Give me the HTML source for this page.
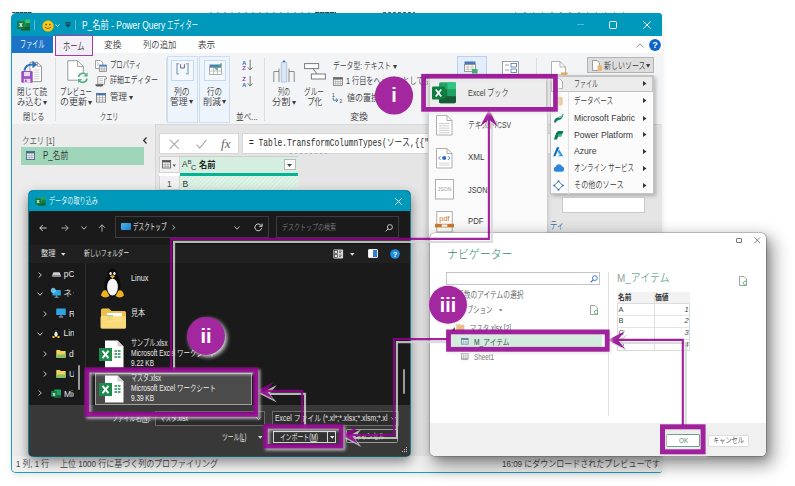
<!DOCTYPE html>
<html lang="ja"><head>
<meta charset="utf-8">
<title>Power Query エディター</title>
<style>
*{box-sizing:border-box;margin:0;padding:0}
html,body{width:795px;height:486px;overflow:hidden;background:#fff}
body{font-family:"Liberation Sans","Noto Sans CJK JP",sans-serif;font-size:9px;font-weight:350;color:#3a3a3a;position:relative}
.a{position:absolute}
.t{position:absolute;white-space:nowrap;line-height:1;transform-origin:0 50%;transform:translateY(-50%)}
.w{color:#fff}
.mono{font-family:"Liberation Mono","Noto Sans CJK JP",monospace}
svg{position:absolute;overflow:visible}
.sep{position:absolute;width:1px;background:#dcdcdc}
</style>
</head>
<body>
<!-- ===== fragments of cropped text above the window ===== -->
<div class="a" style="left:12px;top:11.6px;width:20px;height:1.6px;background:repeating-linear-gradient(90deg,#222 0 3px,#777 3px 4px);opacity:.85"></div>
<div class="a" style="left:210px;top:12.2px;width:100px;height:1px;background:repeating-linear-gradient(90deg,#777 0 2px,transparent 2px 7px);opacity:.55"></div>
<div class="a" style="left:315px;top:11.6px;width:21px;height:1.6px;background:repeating-linear-gradient(90deg,#222 0 4px,#888 4px 5px);opacity:.85"></div>
<div class="a" style="left:383px;top:11.8px;width:32px;height:1.4px;background:repeating-linear-gradient(90deg,#333 0 3px,transparent 3px 5px);opacity:.8"></div>
<div class="a" style="left:515px;top:12.2px;width:113px;height:1px;background:repeating-linear-gradient(90deg,#666 0 1.5px,transparent 1.5px 9px);opacity:.6"></div>
<!-- ===== MAIN WINDOW ===== -->
<div class="a" style="left:11px;top:13px;width:651px;height:460px;background:#e5e5e5;border-radius:5px;box-shadow:0 3px 6px rgba(0,0,0,.10)"></div>
<!-- title bar -->
<div class="a" style="left:11px;top:13px;width:651px;height:23px;background:#0099bc;border-radius:5px 3px 0 0"></div>
<!-- tab row -->
<div class="a" style="left:12px;top:36px;width:650px;height:17.3px;background:#fff"></div>
<div class="a" style="left:11.5px;top:35.8px;width:41.5px;height:17px;background:#1b73c8"></div>
<!-- ribbon -->
<div class="a" style="left:12px;top:53.3px;width:650px;height:70.7px;background:#f3f4f6"></div>
<div class="a" style="left:12px;top:123.7px;width:650px;height:1px;background:#d8d8d8"></div>
<div class="a" style="left:55px;top:34.5px;width:38px;height:21px;background:#f4eff6;border:1px solid #a23aa8"></div>
<!-- window teal border (left/right/bottom) -->
<div class="a" style="left:11px;top:30px;width:651px;height:443px;border:1px solid #1a9dbd;border-top:none;border-right:none;border-radius:0 0 3px 5px;pointer-events:none"></div>

<!-- title bar content -->
<svg style="left:17px;top:18.5px" width="13" height="12" viewBox="0 0 13 12">
  <rect x="4" y="0.5" width="9" height="11" rx="1" fill="#21a366"></rect>
  <rect x="8.5" y="0.5" width="4.5" height="3.7" fill="#33c481"></rect>
  <rect x="8.5" y="4.2" width="4.5" height="3.7" fill="#107c41"></rect>
  <rect x="4" y="7.9" width="9" height="3.6" fill="#185c37"></rect>
  <rect x="0" y="2.3" width="7.6" height="7.6" rx="1" fill="#107c41"></rect>
  <text x="3.8" y="8.4" font-size="6.5" font-weight="bold" fill="#fff" text-anchor="middle" font-family="Liberation Sans, sans-serif">x</text>
</svg>
<div class="a" style="left:34px;top:20px;width:1px;height:10px;background:#5fbdd3"></div>
<svg style="left:41.5px;top:19.5px" width="12" height="12" viewBox="0 0 12 12">
  <circle cx="6" cy="6" r="5.6" fill="#f8c81c" stroke="#c79a10" stroke-width=".5"></circle>
  <circle cx="4.1" cy="4.6" r=".8" fill="#5a4300"></circle><circle cx="7.9" cy="4.6" r=".8" fill="#5a4300"></circle>
  <path d="M3.2 7.2 Q6 10 8.8 7.2" fill="none" stroke="#5a4300" stroke-width=".8" stroke-linecap="round"></path>
</svg>
<svg style="left:55px;top:23.5px" width="5" height="3" viewBox="0 0 5 3"><path d="M.5 .3 L2.5 2.5 L4.5 .3" fill="none" stroke="#d8eef4" stroke-width=".9"></path></svg>
<svg style="left:64.5px;top:22px" width="6" height="6" viewBox="0 0 6 6"><rect x=".3" y=".3" width="5.4" height="1.1" fill="#14333c"></rect><path d="M.4 2.6 H5.6 L3 5.6 Z" fill="#14333c"></path></svg>
<div class="a" style="left:75px;top:20px;width:1px;height:10px;background:#5fbdd3"></div>
<span class="t w" style="left: 81.7px; top: 24.8px; font-size: 11px; transform: translateY(-50%) scaleX(0.759);">P_名前 - Power Query</span>
<span class="t w" style="left: 167.3px; top: 24.8px; font-size: 11px; transform: translateY(-50%) scaleX(0.572);">エディター</span>
<!-- window controls -->
<div class="a" style="left:577px;top:24px;width:7px;height:1px;background:#4fb9d3"></div>
<div class="a" style="left:609px;top:21px;width:8px;height:8px;border:1px solid #fff;border-radius:1.5px"></div>
<svg style="left:642.5px;top:21px" width="8" height="8" viewBox="0 0 8 8"><path d="M.4 .4 L7.6 7.6 M7.6 .4 L.4 7.6" stroke="#fff" stroke-width="1"></path></svg>
<!-- tabs -->
<span class="t w" style="left: 20px; top: 45px; font-size: 10px; transform: translateY(-50%) scaleX(0.613);">ファイル</span>
<span class="t" style="left: 62.5px; top: 45.5px; font-size: 10.5px; color: rgb(51, 51, 51); transform: translateY(-50%) scaleX(0.689);">ホーム</span>
<span class="t" style="left: 104.4px; top: 45.2px; font-size: 9.5px; color: rgb(58, 58, 58); transform: translateY(-50%) scaleX(0.91);">変換</span>
<span class="t" style="left: 143.2px; top: 45.2px; font-size: 9.5px; color: rgb(58, 58, 58); transform: translateY(-50%) scaleX(0.876);">列の追加</span>
<span class="t" style="left: 198.3px; top: 45.2px; font-size: 9.5px; color: rgb(58, 58, 58); transform: translateY(-50%) scaleX(0.905);">表示</span>
<svg style="left:636px;top:42.5px" width="8" height="5" viewBox="0 0 8 5"><path d="M.5 4.3 L4 .8 L7.5 4.3" fill="none" stroke="#8a8a8a" stroke-width="1"></path></svg>
<svg style="left:649.2px;top:39px" width="12" height="12" viewBox="0 0 12 12"><circle cx="6" cy="6" r="5.9" fill="#0b64c8"></circle><text x="6" y="9.2" text-anchor="middle" font-size="9" font-weight="bold" fill="#fff" font-family="Liberation Sans, sans-serif">?</text></svg>
<!-- ribbon content -->
<!-- group 1: close & load -->
<svg style="left:20px;top:59px" width="23" height="25" viewBox="0 0 23 25">
  <path d="M10 3.3 H17.5 L21.5 7.3 V22.6 H10 Z" fill="#fff" stroke="#8f8f8f" stroke-width=".9"></path>
  <path d="M17.5 3.3 V7.3 H21.5" fill="none" stroke="#8f8f8f" stroke-width=".8"></path>
  <path d="M14 11h5.5M14 13.2h5.5M14 15.4h5.5M14 17.6h5.5M14 19.8h5.5" stroke="#c3c3c3" stroke-width=".8"></path>
  <path d="M4.4 11.6 Q5.2 5.2 13.4 5.5" fill="none" stroke="#2f72b8" stroke-width="2.1"></path>
  <path d="M12.4 1.8 L17.4 5.7 L12.4 9.2 Z" fill="#2f72b8"></path>
  <rect x="1.3" y="12" width="11.4" height="11.8" rx="1.2" fill="#9a4fc0"></rect>
  <rect x="4" y="13" width="6" height="4.2" fill="#ead9f3"></rect>
  <rect x="3.8" y="19.8" width="6.6" height="4" fill="#ead9f3"></rect>
  <rect x="5" y="20.6" width="1.6" height="2.4" fill="#9a4fc0"></rect>
</svg>
<span class="t" style="left: 16.5px; top: 92.3px; font-size: 9.5px; transform: translateY(-50%) scaleX(0.789);">閉じて読</span>
<span class="t" style="left: 16.5px; top: 102.3px; font-size: 9.5px; transform: translateY(-50%) scaleX(0.877);">み込む</span>
<span class="t" style="left:42.5px;top:102.8px;font-size:7.5px">▾</span>
<span class="t" style="left: 22.5px; top: 117.3px; font-size: 9.5px; transform: translateY(-50%) scaleX(0.754);">閉じる</span>
<div class="sep" style="left:55px;top:58px;height:63px"></div>
<!-- group 2: query -->
<svg style="left:66.5px;top:60px" width="22" height="24" viewBox="0 0 22 24">
  <path d="M.8 .7 H10.5 L16.3 6.5 V20.2 H.8 Z" fill="#fff" stroke="#8f8f8f" stroke-width=".9"></path>
  <path d="M10.5 .7 V6.5 H16.3" fill="none" stroke="#8f8f8f" stroke-width=".8"></path>
  <circle cx="15.8" cy="17.8" r="5.8" fill="#f3f4f6"></circle>
  <path d="M11.6 17 A4.3 4.3 0 0 1 19 14.6" fill="none" stroke="#58b384" stroke-width="1.7"></path>
  <path d="M20.6 12.4 V16.6 H16.4 Z" fill="#58b384"></path>
  <path d="M20 18.6 A4.3 4.3 0 0 1 12.6 21" fill="none" stroke="#58b384" stroke-width="1.7"></path>
  <path d="M11 23.2 V19 H15.2 Z" fill="#58b384"></path>
</svg>
<span class="t" style="left: 60px; top: 92.3px; font-size: 9.5px; transform: translateY(-50%) scaleX(0.673);">プレビュー</span>
<span class="t" style="left: 60px; top: 102.3px; font-size: 9.5px; transform: translateY(-50%) scaleX(0.947);">の更新</span>
<span class="t" style="left:88px;top:102.8px;font-size:7.5px">▾</span>
<svg style="left:95px;top:59.5px" width="12" height="12" viewBox="0 0 12 12"><path d="M.5 .5 H5.3 L7.8 3 V8.5 H.5Z" fill="#fff" stroke="#8a8a8a" stroke-width=".8"></path><path d="M2 3.2h2M2 5h2" stroke="#9ab" stroke-width=".7"></path><rect x="4.6" y="5" width="7" height="6.6" fill="#fff" stroke="#777" stroke-width=".7"></rect><rect x="4.6" y="5" width="7" height="1.6" fill="#3f7fc4"></rect><path d="M4.6 8.2h7M4.6 9.9h7M6.9 6.6v5M9.2 6.6v5" stroke="#888" stroke-width=".5"></path></svg>
<span class="t" style="left: 109.5px; top: 65.4px; font-size: 9.5px; transform: translateY(-50%) scaleX(0.671);">プロパティ</span>
<svg style="left:95px;top:75.5px" width="12" height="11" viewBox="0 0 12 11"><path d="M2.8 .5 H10 Q11.4 .5 11.4 2 V3 H9.6 V8.2 H2.8Z" fill="#fff" stroke="#7d7d7d" stroke-width=".8"></path><path d="M4.3 2.8h3.6M4.3 4.5h3.6M4.3 6.2h3.6" stroke="#b5b5b5" stroke-width=".7"></path><path d="M.4 8.2 H8.2 V9 Q8.2 10.4 6.8 10.4 H1.8 Q.4 10.4 .4 9Z" fill="#5f5f5f"></path></svg>
<span class="t" style="left: 109.5px; top: 80.3px; font-size: 9.5px; transform: translateY(-50%) scaleX(0.729);">詳細エディター</span>
<svg style="left:96px;top:93px" width="10" height="9.5" viewBox="0 0 10 9.5"><rect x=".4" y=".4" width="9.2" height="8.7" fill="#fff" stroke="#6f6f6f" stroke-width=".8"></rect><rect x=".4" y=".4" width="9.2" height="2" fill="#3f74b5"></rect><path d="M.4 4.7h9.2M.4 6.9h9.2M3.4 2.4v6.7M6.5 2.4v6.7" stroke="#8a8a8a" stroke-width=".55"></path></svg>
<span class="t" style="left: 109.5px; top: 97.4px; font-size: 9.5px; transform: translateY(-50%) scaleX(0.894);">管理</span>
<span class="t" style="left:129.3px;top:97.8px;font-size:7.5px">▾</span>
<span class="t" style="left: 99.5px; top: 117.3px; font-size: 9.5px; transform: translateY(-50%) scaleX(0.649);">クエリ</span>
<div class="sep" style="left:165.8px;top:58px;height:63px"></div>
<!-- group 3: manage columns / reduce rows -->
<div class="a" style="left:167.2px;top:56.2px;width:30.4px;height:66.8px;background:#eef4fb;border:1px solid #c9def3"></div>
<div class="a" style="left:199.4px;top:56.2px;width:30.2px;height:66.8px;background:#eef4fb;border:1px solid #c9def3"></div>
<div class="a" style="left:171.3px;top:59.5px;width:22.5px;height:21.8px;background:#f4f8fc;border:1px solid #c3d9f0"></div>
<svg style="left:176px;top:62.5px" width="13" height="12" viewBox="0 0 13 12"><path d="M3 .8 H1 V10.8 H3" fill="none" stroke="#9fb3ca" stroke-width="1.6"></path><path d="M10 .8 H12 V10.8 H10" fill="none" stroke="#9fb3ca" stroke-width="1.6"></path><path d="M4.6 1.2 V5 H8.4 V1.2" fill="none" stroke="#5b5470" stroke-width=".9"></path></svg>
<span class="t" style="left: 174.3px; top: 91.5px; font-size: 9.5px; transform: translateY(-50%) scaleX(0.826);">列の</span>
<span class="t" style="left: 170.2px; top: 101.5px; font-size: 9.5px; transform: translateY(-50%) scaleX(0.926);">管理</span>
<span class="t" style="left:189.3px;top:102px;font-size:7.5px">▾</span>
<div class="a" style="left:203.7px;top:59.5px;width:22.3px;height:21.8px;background:#f4f8fc;border:1px solid #c3d9f0"></div>
<svg style="left:208.7px;top:63px" width="13.5" height="12" viewBox="0 0 13.5 12"><rect x=".5" y="1.5" width="12" height="3" fill="#4a7dbd"></rect><rect x=".5" y="4.5" width="12" height="7" fill="#fff" stroke="#8f8f8f" stroke-width=".7"></rect><path d="M.5 8h12M4.5 4.5v7M8.5 4.5v7" stroke="#9a9a9a" stroke-width=".6"></path><path d="M5 3.6 L7.3 6.2 L12.6 .6" fill="none" stroke="#4cae73" stroke-width="1.4"></path></svg>
<span class="t" style="left: 206.6px; top: 91.5px; font-size: 9.5px; transform: translateY(-50%) scaleX(0.789);">行の</span>
<span class="t" style="left: 202.9px; top: 101.5px; font-size: 9.5px; transform: translateY(-50%) scaleX(0.947);">削減</span>
<span class="t" style="left:222.3px;top:102px;font-size:7.5px">▾</span>
<!-- sort -->
<svg style="left:241.5px;top:59px" width="13" height="30" viewBox="0 0 13 30">
  <text x="0" y="5.6" font-size="6" fill="#2f72b8" font-weight="bold" font-family="Liberation Sans, sans-serif">A</text>
  <text x=".2" y="11.4" font-size="6" fill="#8e3fb5" font-weight="bold" font-family="Liberation Sans, sans-serif">Z</text>
  <path d="M8.2 .8 V10.8 M5.9 8.3 L8.2 11 L10.5 8.3" fill="none" stroke="#666" stroke-width=".9"></path>
  <text x=".2" y="21.8" font-size="6" fill="#8e3fb5" font-weight="bold" font-family="Liberation Sans, sans-serif">Z</text>
  <text x="0" y="27.6" font-size="6" fill="#2f72b8" font-weight="bold" font-family="Liberation Sans, sans-serif">A</text>
  <path d="M8.2 17 V27 M5.9 24.5 L8.2 27.2 L10.5 24.5" fill="none" stroke="#666" stroke-width=".9"></path>
</svg>
<span class="t" style="left: 236px; top: 117.4px; font-size: 9.5px; transform: translateY(-50%) scaleX(0.806);">並べ...</span>
<div class="sep" style="left:263.8px;top:58px;height:63px"></div>
<!-- transform -->
<svg style="left:272.5px;top:59.5px" width="22" height="23" viewBox="0 0 22 23">
  <path d="M8.3 2.5 H13.7 V22 H8.3Z" fill="#dbe7f5" stroke="#9db4d3" stroke-width=".7"></path>
  <path d="M11 0 L12.6 2 H9.4Z" fill="#2b6fc2"></path>
  <path d="M6 11.5 H.8 V22 M16 11.5 H21.2 V22" fill="none" stroke="#8a8a8a" stroke-width="1"></path>
  <path d="M6 8.5 V22 M16 8.5 V22" fill="none" stroke="#8a8a8a" stroke-width="1"></path>
</svg>
<span class="t" style="left: 278px; top: 92.3px; font-size: 9.5px; transform: translateY(-50%) scaleX(0.631);">列の</span>
<span class="t" style="left: 272px; top: 102.3px; font-size: 9.5px; transform: translateY(-50%) scaleX(0.973);">分割</span>
<span class="t" style="left:291.5px;top:102.8px;font-size:7.5px">▾</span>
<svg style="left:304px;top:62.5px" width="22" height="18" viewBox="0 0 22 18">
  <rect x=".6" y=".6" width="14" height="5" fill="#fff" stroke="#7a7a7a" stroke-width="1"></rect>
  <rect x="7.4" y="11" width="14" height="5" fill="#fff" stroke="#7a7a7a" stroke-width="1"></rect>
  <path d="M9 5.6 L13 11" stroke="#7a7a7a" stroke-width="1"></path>
</svg>
<span class="t" style="left: 304px; top: 92.3px; font-size: 9.5px; transform: translateY(-50%) scaleX(0.701);">グルー</span>
<span class="t" style="left: 307px; top: 102.3px; font-size: 9.5px; transform: translateY(-50%) scaleX(0.789);">プ化</span>
<span class="t" style="left: 332.5px; top: 66px; font-size: 9.5px; transform: translateY(-50%) scaleX(0.716);">データ型: テキスト</span>
<span class="t" style="left:393px;top:66.5px;font-size:7.5px">▾</span>
<svg style="left:332.5px;top:76.5px" width="10" height="9" viewBox="0 0 10 9"><rect x=".4" y=".4" width="9.2" height="8.2" fill="#fff" stroke="#666" stroke-width=".7"></rect><rect x=".4" y=".4" width="9.2" height="2.2" fill="#6a6a6a"></rect><path d="M.4 4.6h9.2M.4 6.6h9.2M2.7 2.6v6M5 2.6v6M7.3 2.6v6" stroke="#888" stroke-width=".5"></path></svg>
<span class="t" style="left: 346px; top: 81px; font-size: 9.5px; transform: translateY(-50%) scaleX(0.756);">1 行目をヘッダーとして使用</span>
<svg style="left:332px;top:91.8px" width="12" height="12" viewBox="0 0 12 12"><text x="0" y="4.5" font-size="5" fill="#444" font-family="Liberation Sans, sans-serif">1</text><text x="7.5" y="11" font-size="5" fill="#444" font-family="Liberation Sans, sans-serif">2</text><path d="M1.2 5.5 V8.2 H5.5 M4 6.5 L5.8 8.2 L4 9.9" fill="none" stroke="#2b6fc2" stroke-width=".9"></path></svg>
<span class="t" style="left: 346.5px; top: 97.8px; font-size: 9.5px; transform: translateY(-50%) scaleX(0.842);">値の置換</span>
<span class="t" style="left: 349.5px; top: 117.3px; font-size: 9.5px; transform: translateY(-50%) scaleX(0.947);">変換</span>
<!-- right side of ribbon (mostly hidden by menus) -->
<div class="a" style="left:456.5px;top:55.5px;width:30.5px;height:30px;background:#e3eefb;border:1px solid #b9d1ee"></div>
<svg style="left:464px;top:61px" width="14" height="13" viewBox="0 0 14 13"><rect x=".5" y=".5" width="11" height="3" fill="#4a77b5"></rect><rect x=".5" y="3.5" width="11" height="7" fill="#fff" stroke="#777" stroke-width=".7"></rect><path d="M.5 6h11M.5 8.2h11M4 3.5v7M8 3.5v7" stroke="#999" stroke-width=".5"></path><rect x="8" y="8" width="5.5" height="4.5" fill="#3fae6a"></rect></svg>
<svg style="left:502px;top:61px" width="17" height="14" viewBox="0 0 17 14"><rect x=".5" y=".5" width="16" height="13" fill="#fff" stroke="#8a8a8a" stroke-width=".8"></rect><path d="M3 4h4M3 9h4" stroke="#8a8a8a" stroke-width=".8"></path><rect x="9" y="2.5" width="5.5" height="3.5" fill="#fff" stroke="#4a77b5" stroke-width=".8"></rect><rect x="9" y="8" width="5.5" height="3.5" fill="#fff" stroke="#4a77b5" stroke-width=".8"></rect></svg>
<div class="sep" style="left:536px;top:58px;height:63px"></div>
<svg style="left:550.5px;top:60.5px" width="17" height="14" viewBox="0 0 17 14"><path d="M.5 .5 H9 L14.5 6 V14 H.5Z" fill="#fff" stroke="#a0a0a0" stroke-width=".8"></path><path d="M9 .5 V6 H14.5" fill="none" stroke="#a0a0a0" stroke-width=".8"></path><rect x="10" y="11.5" width="6.5" height="2" fill="#e8a33d"></rect></svg>
<!-- new source button -->
<div class="a" style="left:587px;top:57.2px;width:66.5px;height:16.2px;background:#dddddd;border:1px solid #b4b4b4"></div>
<svg style="left:591.5px;top:60px" width="11" height="11" viewBox="0 0 11 11"><path d="M.5 .5 H5 L7.5 3 V10.5 H.5Z" fill="#fff" stroke="#888" stroke-width=".8"></path><rect x="5.5" y="5" width="4.5" height="6" rx="1.5" fill="#e9b77a"></rect></svg>
<span class="t" style="left: 603.5px; top: 65.5px; font-size: 9.5px; transform: translateY(-50%) scaleX(0.734);">新しいソース</span>
<span class="t" style="left:646px;top:66px;font-size:7.5px">▾</span>
<!-- body: query pane -->
<div class="a" style="left:12px;top:124px;width:143px;height:332px;background:#ececec"></div>
<div class="a" style="left:155px;top:124px;width:1px;height:332px;background:#d6d6d6"></div>
<span class="t" style="left: 21.5px; top: 141.3px; font-size: 9.5px; color: rgb(85, 85, 85); transform: translateY(-50%) scaleX(0.779);">クエリ [1]</span>
<svg style="left:143px;top:136.5px" width="4" height="7" viewBox="0 0 4 7"><path d="M3.5 .5 L.7 3.5 L3.5 6.5" fill="none" stroke="#333" stroke-width="1.3"></path></svg>
<div class="a" style="left:21px;top:146.5px;width:122.8px;height:18.2px;background:#9fd5b8"></div>
<svg style="left:25.7px;top:151.2px" width="9" height="9" viewBox="0 0 8 8"><rect x=".4" y=".4" width="7.2" height="7.2" fill="#fff" stroke="#4a6a8a" stroke-width=".8"></rect><rect x=".4" y=".4" width="7.2" height="1.8" fill="#4a6a8a"></rect><path d="M.4 4.2h7.2M.4 6h7.2M2.8 2.2v5.4M5.2 2.2v5.4" stroke="#6f8aa6" stroke-width=".5"></path></svg>
<span class="t" style="left: 43px; top: 155.8px; font-size: 10px; color: rgb(51, 51, 51); transform: translateY(-50%) scaleX(0.785);">P_名前</span>
<!-- formula bar -->
<div class="a" style="left:158.5px;top:133px;width:80.5px;height:20.5px;background:#fff;border:1px solid #d6d6d6"></div>
<svg style="left:168.5px;top:138.5px" width="10.5" height="10.5" viewBox="0 0 8 8"><path d="M.5 .5 L7.5 7.5 M7.5 .5 L.5 7.5" stroke="#a9a9a9" stroke-width=".9"></path></svg>
<svg style="left:196px;top:138.5px" width="11" height="10" viewBox="0 0 9 8"><path d="M.5 4.5 L3 7.3 L8.5 .6" fill="none" stroke="#a9a9a9" stroke-width=".9"></path></svg>
<span class="t" style="left: 221.3px; top: 143px; font-size: 13px; font-family: &quot;Liberation Serif&quot;, serif; font-style: italic; color: rgb(102, 102, 102); transform: translateY(-50%) scaleX(1.012);">fx</span>
<div class="a" style="left:242px;top:133px;width:320px;height:20.5px;background:#fff;border:1px solid #d6d6d6"></div>
<span class="t mono" style="left: 249px; top: 143.5px; font-size: 10px; color: rgb(42, 42, 42); transform: translateY(-50%) scaleX(0.791);">= Table.TransformColumnTypes(ソース,{{"名前", type text}})</span>
<div class="a" style="left:290px;top:152.5px;width:40px;height:1px;background:repeating-linear-gradient(90deg,#999 0 2px,transparent 2px 5px);opacity:.6"></div>
<!-- grid -->
<div class="a" style="left:159px;top:156px;width:138.5px;height:34.5px;background:#fff"></div>
<div class="a" style="left:159px;top:156px;width:20.5px;height:16.5px;background:#f1f1f1;border:1px solid #d4d4d4"></div>
<svg style="left:162px;top:160px" width="15" height="9" viewBox="0 0 15 9"><rect x=".4" y=".4" width="8.2" height="7.6" fill="#fff" stroke="#555" stroke-width=".8"></rect><rect x=".4" y=".4" width="8.2" height="2" fill="#555"></rect><path d="M.4 4.4h8.2M.4 6.2h8.2M3.2 2.4v5.6M5.9 2.4v5.6" stroke="#777" stroke-width=".5"></path><path d="M10.5 4.5 h3.5 l-1.75 2.2z" fill="#555"></path></svg>
<div class="a" style="left:179.5px;top:156px;width:118px;height:17px;background:#d4eee0;border-top:1px solid #cfcfcf"></div>
<div class="a" style="left:179.5px;top:172.6px;width:118px;height:3.2px;background:#05b292"></div>
<svg style="left:181.7px;top:157.5px" width="15.4" height="13.2" viewBox="0 0 14 12"><text x="0" y="8.5" font-size="7.5" fill="#333" font-family="Liberation Sans, sans-serif">A</text><text x="5" y="5.2" font-size="5.5" fill="#333" font-family="Liberation Sans, sans-serif">B</text><text x="8.2" y="10.8" font-size="6.5" fill="#333" font-family="Liberation Sans, sans-serif">C</text></svg>
<span class="t" style="left: 198.7px; top: 164.5px; font-size: 9px; font-weight: bold; color: rgb(34, 34, 34); transform: translateY(-50%) scaleX(0.916);">名前</span>
<div class="a" style="left:284px;top:159px;width:11.5px;height:11px;background:#fff;border:1px solid #b9b9b9"></div>
<svg style="left:287.2px;top:163.5px" width="5" height="3" viewBox="0 0 5 3"><path d="M0 0h5L2.5 3z" fill="#444"></path></svg>
<div class="a" style="left:159px;top:175.8px;width:20.5px;height:14.7px;background:#f1f1f1;border:1px solid #d4d4d4;border-top:none"></div>
<span class="t" style="left:167px;top:183.5px;font-size:8.5px;color:#444">1</span>
<div class="a" style="left:179.5px;top:175.8px;width:118px;height:14.7px;background:repeating-linear-gradient(135deg,#d4eee0 0 1.5px,#dff3e8 1.5px 3px)"></div>
<span class="t" style="left:182.5px;top:183.5px;font-size:8.5px;color:#333">B</span>
<!-- status bar -->
<div class="a" style="left:12px;top:456px;width:650px;height:16px;background:#f0f0f0;border-radius:0 0 3px 4px"></div>
<span class="t" style="left: 15.5px; top: 464.3px; font-size: 9.5px; color: rgb(68, 68, 68); transform: translateY(-50%) scaleX(0.822);">1 列, 1 行</span>
<span class="t" style="left: 60px; top: 464.3px; font-size: 9.5px; color: rgb(68, 68, 68); transform: translateY(-50%) scaleX(0.841);">上位 1000 行に基づく列のプロファイリング</span>
<span class="t" style="left: 501.5px; top: 464.3px; font-size: 9.5px; color: rgb(68, 68, 68); transform: translateY(-50%) scaleX(0.843);">16:09 にダウンロードされたプレビューです</span>
<!-- ===== first-level menu (新しいソース) ===== -->
<div class="a" style="left:549.5px;top:74.5px;width:104.3px;height:119.5px;background:#fbfbfb;border:1px solid #c6c6c6;box-shadow:2px 2px 4px rgba(0,0,0,.25)"></div>
<div class="a" style="left:568px;top:75.5px;width:1px;height:118.5px;background:#e2e2e2"></div>
<div class="a" style="left:550.5px;top:75.5px;width:102.3px;height:16px;background:#ebebeb;border:1px solid #c2c2c2"></div>
<svg style="left:554px;top:78px" width="9" height="11" viewBox="0 0 9 11"><path d="M.5 .5 H5.5 L8.5 3.5 V10.5 H.5Z" fill="#fff" stroke="#9a9a9a" stroke-width=".8"></path></svg>
<span class="t" style="left: 573.7px; top: 83.7px; font-size: 9.5px; transform: translateY(-50%) scaleX(0.631);">ファイル</span>
<span class="t" style="left: 573.7px; top: 100.8px; font-size: 9.5px; transform: translateY(-50%) scaleX(0.69);">データベース</span>
<span class="t" style="left: 573.7px; top: 118px; font-size: 9.5px; transform: translateY(-50%) scaleX(0.903);">Microsoft Fabric</span>
<span class="t" style="left: 573.7px; top: 134.8px; font-size: 9.5px; transform: translateY(-50%) scaleX(0.909);">Power Platform</span>
<span class="t" style="left: 573.7px; top: 151.3px; font-size: 9.5px; transform: translateY(-50%) scaleX(0.906);">Azure</span>
<span class="t" style="left: 573.7px; top: 168.3px; font-size: 9.5px; transform: translateY(-50%) scaleX(0.681);">オンライン サービス</span>
<span class="t" style="left: 573.7px; top: 185px; font-size: 9.5px; transform: translateY(-50%) scaleX(0.75);">その他のソース</span>
<svg style="left:643px;top:81.2px" width="3.5" height="5" viewBox="0 0 3.5 5"><path d="M0 0 L3.5 2.5 L0 5z" fill="#333"></path></svg>
<svg style="left:643px;top:98.3px" width="3.5" height="5" viewBox="0 0 3.5 5"><path d="M0 0 L3.5 2.5 L0 5z" fill="#333"></path></svg>
<svg style="left:643px;top:115.5px" width="3.5" height="5" viewBox="0 0 3.5 5"><path d="M0 0 L3.5 2.5 L0 5z" fill="#333"></path></svg>
<svg style="left:643px;top:132.3px" width="3.5" height="5" viewBox="0 0 3.5 5"><path d="M0 0 L3.5 2.5 L0 5z" fill="#333"></path></svg>
<svg style="left:643px;top:148.8px" width="3.5" height="5" viewBox="0 0 3.5 5"><path d="M0 0 L3.5 2.5 L0 5z" fill="#333"></path></svg>
<svg style="left:643px;top:165.8px" width="3.5" height="5" viewBox="0 0 3.5 5"><path d="M0 0 L3.5 2.5 L0 5z" fill="#333"></path></svg>
<svg style="left:643px;top:182.5px" width="3.5" height="5" viewBox="0 0 3.5 5"><path d="M0 0 L3.5 2.5 L0 5z" fill="#333"></path></svg>
<!-- icons of first-level menu -->
<svg style="left:554.5px;top:95.5px" width="8" height="10" viewBox="0 0 8 10"><ellipse cx="4" cy="2" rx="3.6" ry="1.6" fill="#f0cfa3"></ellipse><path d="M.4 2 V8 A3.6 1.6 0 0 0 7.6 8 V2" fill="#ecc596"></path></svg>
<svg style="left:552.5px;top:113px" width="11" height="10" viewBox="0 0 11 10"><path d="M1 9.5 Q1 5.5 4.5 4.5 Q8.5 3.5 10.5 .5 Q10 6 6 7 Q3 7.7 3.2 9.5Z" fill="#137b63"></path><path d="M4.5 4.5 Q8.5 3.5 10.5 .5 Q9.5 4.5 6.5 5.2Z" fill="#79d3b1"></path></svg>
<svg style="left:552.5px;top:129.7px" width="11" height="10" viewBox="0 0 11 10"><path d="M.8 9.5 L3.2 3 Q4 1 6 1 H10.5 L9.3 4 H6 L4 9.5Z" fill="#0c7a5a"></path><path d="M5 6.8 H8.2 L9.3 4 H6Z" fill="#36b37e"></path></svg>
<svg style="left:553px;top:146.6px" width="10.5" height="9.5" viewBox="0 0 10.5 9.5"><path d="M3.8 .3 H6.5 L2.3 9.2 H.2Z" fill="#0f6cbd"></path><path d="M6 2.2 L10.3 9.2 H4 L7 8 L4.8 5Z" fill="#3a9be8"></path></svg>
<svg style="left:552.5px;top:164.3px" width="12" height="8" viewBox="0 0 12 8"><path d="M3 7.8 A2.6 2.6 0 0 1 2.6 2.7 A3.4 3.4 0 0 1 9 2.2 A2.9 2.9 0 0 1 9.2 7.8Z" fill="#2d86dc"></path></svg>
<svg style="left:553px;top:179.7px" width="11" height="11" viewBox="0 0 11 11"><path d="M5.5 1.2 L9.8 5.5 L5.5 9.8 L1.2 5.5Z" fill="#fff" stroke="#3b73b9" stroke-width="1"></path><circle cx="5.5" cy="1.2" r="1" fill="#3b73b9"></circle><circle cx="9.8" cy="5.5" r="1" fill="#3b73b9"></circle><circle cx="5.5" cy="9.8" r="1" fill="#3b73b9"></circle><circle cx="1.2" cy="5.5" r="1" fill="#3b73b9"></circle></svg>
<!-- behind: small property box under the menu -->
<div class="a" style="left:562px;top:197px;width:83px;height:16px;background:#fff;border:1px solid #c9c9c9"></div>
<span class="t" style="left: 550px; top: 226px; font-size: 10px; color: rgb(47, 111, 181); transform: translateY(-50%) scaleX(0.721);">ティ</span>
<!-- ===== second-level menu (ファイル) ===== -->
<div class="a" style="left:427.5px;top:75px;width:120px;height:166px;background:#fafafa;border:1px solid #cfcfcf;box-shadow:-1px 2px 5px rgba(0,0,0,.22)"></div>
<div class="a" style="left:428.5px;top:76px;width:118px;height:33px;background:#ededed;border:1px solid #c4c4c4"></div>
<!-- excel icon -->
<svg style="left:432px;top:82px" width="24" height="21.5" viewBox="0 0 24 21.5">
  <rect x="7" y=".3" width="17" height="20.9" rx="1.6" fill="#21a366"></rect>
  <rect x="15.5" y=".3" width="8.5" height="7" fill="#33c481"></rect>
  <rect x="7" y="7.3" width="8.5" height="7" fill="#107c41"></rect>
  <rect x="15.5" y="7.3" width="8.5" height="7" fill="#21a366"></rect>
  <path d="M7 14.3 H24 V19.6 Q24 21.2 22.4 21.2 H8.6 Q7 21.2 7 19.6Z" fill="#185c37"></path>
  <rect x="0" y="4.5" width="13" height="13" rx="1.3" fill="#107c41"></rect>
  <path d="M3.8 7.5 L9.2 14.5 M9.2 7.5 L3.8 14.5" stroke="#fff" stroke-width="1.7"></path>
</svg>
<span class="t" style="left: 467.5px; top: 92.6px; font-size: 9.5px; transform: translateY(-50%) scaleX(0.745);">Excel ブック</span>
<!-- text/csv -->
<svg style="left:436px;top:114.5px" width="16.5" height="20.5" viewBox="0 0 16.5 20.5"><path d="M.5 .5 H11 L16 5.5 V20 H.5Z" fill="#fff" stroke="#9a9a9a" stroke-width=".8"></path><path d="M11 .5 V5.5 H16" fill="none" stroke="#9a9a9a" stroke-width=".8"></path><path d="M3 8.5h10.5M3 10.8h10.5M3 13.1h10.5M3 15.4h10.5M3 17.7h10.5" stroke="#b7b7b7" stroke-width=".7"></path></svg>
<span class="t" style="left: 467.5px; top: 125px; font-size: 9.5px; transform: translateY(-50%) scaleX(0.718);">テキスト/CSV</span>
<!-- xml -->
<svg style="left:436px;top:147.5px" width="16.5" height="20.5" viewBox="0 0 16.5 20.5"><path d="M.5 .5 H11 L16 5.5 V20 H.5Z" fill="#fff" stroke="#9a9a9a" stroke-width=".8"></path><path d="M11 .5 V5.5 H16" fill="none" stroke="#9a9a9a" stroke-width=".8"></path><circle cx="8.2" cy="10" r="2.1" fill="#2b6fc2"></circle><path d="M4.6 8 L2.6 10 L4.6 12 M11.8 8 L13.8 10 L11.8 12" fill="none" stroke="#2b6fc2" stroke-width=".8"></path><path d="M3 15h10.5M3 17h10.5" stroke="#c9c9c9" stroke-width=".8"></path></svg>
<span class="t" style="left: 467.5px; top: 157.3px; font-size: 9.5px; transform: translateY(-50%) scaleX(0.844);">XML</span>
<!-- json -->
<svg style="left:434.5px;top:179px" width="19" height="20.5" viewBox="0 0 19 20.5"><rect x=".5" y=".5" width="18" height="19.5" fill="#fff" stroke="#9a9a9a" stroke-width=".8"></rect><text x="9.5" y="12" text-anchor="middle" font-size="5.2" fill="#9a9a9a" font-family="Liberation Sans, sans-serif">JSON</text></svg>
<span class="t" style="left: 467.5px; top: 189.8px; font-size: 9.5px; transform: translateY(-50%) scaleX(0.769);">JSON</span>
<!-- pdf -->
<svg style="left:434.5px;top:210.5px" width="19" height="21.5" viewBox="0 0 19 21.5"><rect x="1.8" y=".5" width="15.4" height="20.5" fill="#fff" stroke="#9a9a9a" stroke-width=".8"></rect><text x="9.5" y="10" text-anchor="middle" font-size="7.4" fill="#d0762a" font-family="Liberation Sans, sans-serif">pdf</text><rect x="0" y="12.8" width="19" height="3.6" fill="#c9792e"></rect><rect x="6.7" y="13.5" width="5.6" height="2.2" fill="#fff"></rect></svg>
<span class="t" style="left: 467.5px; top: 221.3px; font-size: 9.5px; transform: translateY(-50%) scaleX(0.816);">PDF</span>
<!-- ===== DARK FILE DIALOG ===== -->
<div class="a" style="left:29px;top:191px;width:381px;height:264.5px;background:#1a1a1a;border-radius:4px;box-shadow:0 5px 12px 1px rgba(0,0,0,.45),0 0 0 .9px #0f9abc"></div>
<div class="a" style="left:29px;top:191px;width:381px;height:19.5px;background:#0099bc;border-radius:4px 4px 0 0"></div>
<div class="a" style="left:29px;top:244.6px;width:381px;height:18.7px;background:#202020"></div>
<div class="a" style="left:29px;top:405px;width:381px;height:50.5px;background:#383838;border-radius:0 0 4px 4px"></div>
<div class="a" style="left:85px;top:263.3px;width:1px;height:141.7px;background:#303030"></div>
<!-- title -->
<svg style="left:35px;top:195.5px" width="10.5" height="10.5" viewBox="0 0 13 12">
  <rect x="4" y="0.5" width="9" height="11" rx="1" fill="#21a366"></rect><rect x="8.5" y="4.2" width="4.5" height="3.7" fill="#107c41"></rect><rect x="4" y="7.9" width="9" height="3.6" fill="#185c37"></rect>
  <rect x="0" y="2.3" width="7.6" height="7.6" rx="1" fill="#107c41"></rect><text x="3.8" y="8.4" font-size="6.5" font-weight="bold" fill="#fff" text-anchor="middle" font-family="Liberation Sans, sans-serif">x</text>
</svg>
<span class="t w" style="left: 48.5px; top: 201px; font-size: 9px; transform: translateY(-50%) scaleX(0.68);">データの取り込み</span>
<svg style="left:394.5px;top:197.5px" width="7" height="7" viewBox="0 0 7 7"><path d="M.4 .4 L6.6 6.6 M6.6 .4 L.4 6.6" stroke="#fff" stroke-width=".9"></path></svg>
<!-- address row -->
<svg style="left:39px;top:223.5px" width="8" height="8" viewBox="0 0 8 8"><path d="M7.6 4 H.8 M3.8 1 L.8 4 L3.8 7" fill="none" stroke="#e6e6e6" stroke-width=".9"></path></svg>
<svg style="left:61px;top:223.5px" width="8" height="8" viewBox="0 0 8 8"><path d="M.4 4 H7.2 M4.2 1 L7.2 4 L4.2 7" fill="none" stroke="#b8b8b8" stroke-width=".9"></path></svg>
<svg style="left:80.5px;top:225.5px" width="6" height="4" viewBox="0 0 6 4"><path d="M.5 .5 L3 3.2 L5.5 .5" fill="none" stroke="#d0d0d0" stroke-width=".9"></path></svg>
<svg style="left:98px;top:223.5px" width="8" height="8" viewBox="0 0 8 8"><path d="M4 7.6 V.8 M1 3.8 L4 .8 L7 3.8" fill="none" stroke="#b8b8b8" stroke-width=".9"></path></svg>
<div class="a" style="left:115px;top:216.3px;width:153.5px;height:21.4px;border:1px solid #3d3d3d;background:#1a1a1a"></div>
<div class="a" style="left:121px;top:223.2px;width:9.5px;height:7px;background:linear-gradient(135deg,#49b6ea,#1c7fc9);border-radius:1px"></div>
<span class="t w" style="left: 133px; top: 227.3px; font-size: 9px; transform: translateY(-50%) scaleX(0.62);">デスクトップ</span>
<svg style="left:172px;top:225px" width="3.5" height="5" viewBox="0 0 3.5 5"><path d="M.5 .4 L2.8 2.5 L.5 4.6" fill="none" stroke="#ddd" stroke-width=".8"></path></svg>
<svg style="left:233.5px;top:225.5px" width="6" height="4" viewBox="0 0 6 4"><path d="M.5 .5 L3 3.2 L5.5 .5" fill="none" stroke="#d0d0d0" stroke-width=".9"></path></svg>
<svg style="left:253.5px;top:223px" width="8.5" height="8.5" viewBox="0 0 9 9"><path d="M7.8 3 A3.6 3.6 0 1 0 8.1 5.4" fill="none" stroke="#e0e0e0" stroke-width="1"></path><path d="M8.6 .6 V3.6 H5.6" fill="none" stroke="#e0e0e0" stroke-width="1"></path></svg>
<div class="a" style="left:276px;top:216.3px;width:122.5px;height:21.4px;border:1px solid #3d3d3d;background:#1a1a1a"></div>
<span class="t" style="left: 282px; top: 227.3px; font-size: 8.5px; color: rgb(122, 122, 122); transform: translateY(-50%) scaleX(0.706);">デスクトップの検索</span>
<svg style="left:385px;top:223.5px" width="8" height="8" viewBox="0 0 8 8"><circle cx="4.9" cy="3.1" r="2.5" fill="none" stroke="#d0d0d0" stroke-width=".9"></circle><path d="M3.1 4.9 L.6 7.4" stroke="#d0d0d0" stroke-width="1"></path></svg>
<!-- toolbar -->
<span class="t" style="left: 41px; top: 253.4px; font-size: 8.5px; color: rgb(232, 232, 232); transform: translateY(-50%) scaleX(0.852);">整理</span>
<svg style="left:60.5px;top:252.5px" width="4.5" height="2.8" viewBox="0 0 5 3"><path d="M0 0h5L2.5 3z" fill="#ddd"></path></svg>
<span class="t" style="left: 83.5px; top: 253.4px; font-size: 8.5px; color: rgb(232, 232, 232); transform: translateY(-50%) scaleX(0.662);">新しいフォルダー</span>
<svg style="left:333px;top:248.5px" width="10.5" height="10" viewBox="0 0 10.5 10"><rect x=".4" y=".4" width="9.7" height="9.2" rx="1" fill="#d8d8d8"></rect><rect x="1.6" y="1.6" width="3" height="2.8" fill="none" stroke="#333" stroke-width=".6"></rect><rect x="1.6" y="5.6" width="3" height="2.8" fill="none" stroke="#333" stroke-width=".6"></rect><path d="M6 2.2h3M6 3.6h2M6 6.2h3M6 7.6h2" stroke="#333" stroke-width=".6"></path></svg>
<svg style="left:349.5px;top:252.5px" width="4.5" height="2.8" viewBox="0 0 5 3"><path d="M0 0h5L2.5 3z" fill="#ddd"></path></svg>
<div class="a" style="left:368px;top:249px;width:9.5px;height:9px;border:1px solid #e8e8e8;border-radius:1px;background:linear-gradient(90deg,#fff 0 55%,#2a7fd6 55%)"></div>
<svg style="left:390px;top:248.5px" width="10" height="10" viewBox="0 0 10 10"><circle cx="5" cy="5" r="4.8" fill="#1a8ce0"></circle><text x="5" y="7.8" text-anchor="middle" font-size="7.5" font-weight="bold" fill="#fff" font-family="Liberation Sans, sans-serif">?</text></svg>
<!-- nav pane -->
<div class="a" style="left:29px;top:263.3px;width:45px;height:141.7px;overflow:hidden">
  <svg style="left:8.5px;top:8.7px" width="4" height="6" viewBox="0 0 4 6"><path d="M.6 .5 L3.3 3 L.6 5.5" fill="none" stroke="#d6d6d6" stroke-width=".9"></path></svg>
  <svg style="left:22.5px;top:9px" width="9" height="5" viewBox="0 0 9 5"><path d="M1.5 .3 H7.5 L8.8 3 V4.7 H.2 V3Z" fill="#cfcfcf"></path><rect x=".2" y="3" width="8.6" height="1.7" fill="#8a8a8a"></rect></svg>
  <span class="t" style="left:34.7px;top:11.2px;font-size:8.5px;color:#e6e6e6">pC</span>
  <svg style="left:8px;top:29px" width="6" height="4" viewBox="0 0 6 4"><path d="M.5 .6 L3 3.3 L5.5 .6" fill="none" stroke="#d6d6d6" stroke-width=".9"></path></svg>
  <svg style="left:22px;top:24.5px" width="10" height="10" viewBox="0 0 10 10"><rect x="1.5" y="2" width="8.3" height="5.5" rx=".6" fill="#2fa4e4"></rect><path d="M5.6 7.5v1.4M3.6 9.2h4" stroke="#b5c4cf" stroke-width=".8"></path><circle cx="2.3" cy="2.4" r="2.2" fill="#4fc3f0" stroke="#e7f6fc" stroke-width=".4"></circle></svg>
  <span class="t" style="left:34.5px;top:30.2px;font-size:8.5px;color:#e6e6e6">ネッ</span>
  <svg style="left:14px;top:47.5px" width="4" height="6" viewBox="0 0 4 6"><path d="M.6 .5 L3.3 3 L.6 5.5" fill="none" stroke="#d6d6d6" stroke-width=".9"></path></svg>
  <svg style="left:27px;top:45px" width="10" height="10" viewBox="0 0 10 10"><rect x=".2" y=".5" width="9.6" height="6.5" rx=".6" fill="#2fa4e4"></rect><path d="M5 7v1.6M2.8 9h4.4" stroke="#b5c4cf" stroke-width=".9"></path></svg>
  <span class="t" style="left:40px;top:50.3px;font-size:8.5px;color:#e6e6e6">R</span>
  <svg style="left:8px;top:68.5px" width="6" height="4" viewBox="0 0 6 4"><path d="M.5 .6 L3 3.3 L5.5 .6" fill="none" stroke="#d6d6d6" stroke-width=".9"></path></svg>
  <svg style="left:23px;top:64.5px" width="8" height="10" viewBox="0 0 8 10"><ellipse cx="4" cy="5.5" rx="2.6" ry="3.8" fill="#111"></ellipse><ellipse cx="4" cy="2" rx="1.6" ry="1.9" fill="#111"></ellipse><ellipse cx="4" cy="6.3" rx="1.6" ry="2.7" fill="#f5f5f5"></ellipse><ellipse cx="1.5" cy="9" rx="1.5" ry=".9" fill="#f1b21a"></ellipse><ellipse cx="6.5" cy="9" rx="1.5" ry=".9" fill="#f1b21a"></ellipse><path d="M3.3 2.6h1.4L4 3.5z" fill="#f1b21a"></path></svg>
  <span class="t" style="left:34.5px;top:70px;font-size:8.5px;color:#e6e6e6">Linux</span>
  <svg style="left:14px;top:87.5px" width="4" height="6" viewBox="0 0 4 6"><path d="M.6 .5 L3.3 3 L.6 5.5" fill="none" stroke="#d6d6d6" stroke-width=".9"></path></svg>
  <svg style="left:26.5px;top:86px" width="10" height="9" viewBox="0 0 10 9"><path d="M.3 1 H3.8 L4.8 2 H9.7 V8.7 H.3Z" fill="#f4cf5b"></path><rect x=".3" y="5.5" width="9.4" height="3.2" fill="#7dc46b"></rect></svg>
  <span class="t" style="left:40px;top:90.5px;font-size:8.5px;color:#e6e6e6">d</span>
  <svg style="left:14px;top:107.5px" width="4" height="6" viewBox="0 0 4 6"><path d="M.6 .5 L3.3 3 L.6 5.5" fill="none" stroke="#d6d6d6" stroke-width=".9"></path></svg>
  <svg style="left:26.5px;top:106px" width="10" height="9" viewBox="0 0 10 9"><path d="M.3 1 H3.8 L4.8 2 H9.7 V8.7 H.3Z" fill="#f4cf5b"></path><rect x=".3" y="5.5" width="9.4" height="3.2" fill="#7dc46b"></rect></svg>
  <span class="t" style="left:40px;top:110.5px;font-size:8.5px;color:#e6e6e6">U</span>
  <svg style="left:8.5px;top:127.2px" width="4" height="6" viewBox="0 0 4 6"><path d="M.6 .5 L3.3 3 L.6 5.5" fill="none" stroke="#d6d6d6" stroke-width=".9"></path></svg>
  <svg style="left:22px;top:125.5px" width="10" height="9.5" viewBox="0 0 13 12"><rect x="4" y="0.5" width="9" height="11" rx="1" fill="#21a366"></rect><rect x="4" y="7.9" width="9" height="3.6" fill="#185c37"></rect><rect x="0" y="2.3" width="7.6" height="7.6" rx="1" fill="#107c41"></rect><text x="3.8" y="8.4" font-size="6.5" font-weight="bold" fill="#fff" text-anchor="middle" font-family="Liberation Sans, sans-serif">x</text></svg>
  <span class="t" style="left:35px;top:130.3px;font-size:8.5px;color:#e6e6e6">Mic</span>
</div>
<div class="a" style="left:77.8px;top:365px;width:2.3px;height:25px;background:#9a9a9a;border-radius:1px"></div>
<div class="a" style="left:403.3px;top:369px;width:1.6px;height:24.5px;background:#9a9a9a;border-radius:1px"></div>
<!-- file list -->
<svg style="left:100px;top:268px" width="25" height="31" viewBox="0 0 25 31">
  <ellipse cx="12.5" cy="17" rx="8.2" ry="11.5" fill="#0c0c0c"></ellipse>
  <ellipse cx="12.5" cy="6.5" rx="5" ry="6" fill="#0c0c0c"></ellipse>
  <ellipse cx="12.5" cy="19" rx="5.4" ry="8.6" fill="#f6f6f6"></ellipse>
  <ellipse cx="10.6" cy="5.6" rx="1.2" ry="1.5" fill="#fff"></ellipse><ellipse cx="14.4" cy="5.6" rx="1.2" ry="1.5" fill="#fff"></ellipse>
  <path d="M9.8 8 Q12.5 6.6 15.2 8 L12.5 10.6Z" fill="#f2b21b"></path>
  <path d="M1 27.5 Q2.5 21 6.5 22.5 L9.5 28 Q5 31 1 27.5Z" fill="#f2b21b"></path>
  <path d="M24 27.5 Q22.5 21 18.5 22.5 L15.5 28 Q20 31 24 27.5Z" fill="#f2b21b"></path>
</svg>
<span class="t" style="left: 131px; top: 278.2px; font-size: 9px; color: rgb(236, 236, 236); transform: translateY(-50%) scaleX(0.813);">Linux</span>
<svg style="left:99.5px;top:307.5px" width="26.5" height="21" viewBox="0 0 26.5 21">
  <path d="M1 2 Q1 .5 2.5 .5 H9 L11.5 3 H24.5 Q26 3 26 4.5 V19 Q26 20.5 24.5 20.5 H2.5 Q1 20.5 1 19Z" fill="#eebf4a"></path>
  <rect x="7" y="5" width="15" height="9" fill="#fff"></rect><rect x="7" y="7.5" width="6" height="5" fill="#2f9e63"></rect>
  <path d="M.5 9.5 Q.5 8 2 8 H24.5 Q26 8 26 9.5 V19 Q26 20.5 24.5 20.5 H2 Q.5 20.5 .5 19Z" fill="#fbdc7c" opacity=".93"></path>
</svg>
<span class="t" style="left: 131.3px; top: 313px; font-size: 9px; color: rgb(236, 236, 236); transform: translateY(-50%) scaleX(0.777);">見本</span>
<!-- sample.xlsx -->
<svg style="left:98.5px;top:340px" width="25" height="28" viewBox="0 0 25 28"><path d="M6 .5 H18.5 L24.5 6.5 V27.5 H6Z" fill="#fdfdfd"></path><path d="M18.5 .5 V6.5 H24.5Z" fill="#cfcfcf"></path><path d="M15.5 11h6M15.5 14h6M15.5 17h6" stroke="#1e8a4d" stroke-width="1.6" stroke-dasharray="2.6 .8"></path><rect x="0" y="8" width="13" height="13" fill="#1e8a4d"></rect><path d="M3.5 10.8 L9.5 18.2 M9.5 10.8 L3.5 18.2" stroke="#fff" stroke-width="1.9"></path></svg>
<span class="t" style="left: 131px; top: 343.2px; font-size: 9px; color: rgb(236, 236, 236); transform: translateY(-50%) scaleX(0.679);">サンプル.xlsx</span>
<span class="t" style="left: 131px; top: 353.2px; font-size: 8.5px; color: rgb(236, 236, 236); transform: translateY(-50%) scaleX(0.766);">Microsoft Excel ワークシート</span>
<span class="t" style="left: 131px; top: 363.3px; font-size: 9px; color: rgb(236, 236, 236); transform: translateY(-50%) scaleX(0.718);">9.22 KB</span>
<!-- master.xlsx (selected) -->
<div class="a" style="left:94.5px;top:372.5px;width:157.5px;height:32px;background:#4b4b4b;border:1px solid #a2a2a2"></div>
<svg style="left:98.5px;top:375.2px" width="25" height="28" viewBox="0 0 25 28"><path d="M6 .5 H18.5 L24.5 6.5 V27.5 H6Z" fill="#fdfdfd"></path><path d="M18.5 .5 V6.5 H24.5Z" fill="#cfcfcf"></path><path d="M15.5 11h6M15.5 14h6M15.5 17h6" stroke="#1e8a4d" stroke-width="1.6" stroke-dasharray="2.6 .8"></path><rect x="0" y="8" width="13" height="13" fill="#1e8a4d"></rect><path d="M3.5 10.8 L9.5 18.2 M9.5 10.8 L3.5 18.2" stroke="#fff" stroke-width="1.9"></path></svg>
<span class="t" style="left: 131px; top: 378px; font-size: 9px; color: rgb(242, 242, 242); transform: translateY(-50%) scaleX(0.666);">マスタ.xlsx</span>
<span class="t" style="left: 131px; top: 388.3px; font-size: 8.5px; color: rgb(242, 242, 242); transform: translateY(-50%) scaleX(0.766);">Microsoft Excel ワークシート</span>
<span class="t" style="left: 131px; top: 398.4px; font-size: 9px; color: rgb(242, 242, 242); transform: translateY(-50%) scaleX(0.718);">9.39 KB</span>
<!-- bottom controls -->
<span class="t" style="left: 112px; top: 418.3px; font-size: 8.5px; color: rgb(230, 230, 230); transform: translateY(-50%) scaleX(0.688);">ファイル名(<u>N</u>):</span>
<div class="a" style="left:155px;top:411px;width:109.5px;height:14.5px;background:#2c2c2c;border:1px solid #6a6a6a"></div>
<span class="t" style="left: 159.5px; top: 418.3px; font-size: 8.5px; color: rgb(230, 230, 230); transform: translateY(-50%) scaleX(0.659);">マスタ.xlsx</span>
<svg style="left:256px;top:416.5px" width="5" height="3.5" viewBox="0 0 5 3.5"><path d="M.4 .4 L2.5 2.8 L4.6 .4" fill="none" stroke="#ccc" stroke-width=".8"></path></svg>
<div class="a" style="left:271.5px;top:411px;width:127px;height:14.5px;background:#2c2c2c;border:1px solid #6a6a6a"></div>
<span class="t" style="left: 275px; top: 418.3px; font-size: 8.5px; color: rgb(230, 230, 230); transform: translateY(-50%) scaleX(0.805);">Excel ファイル (*.xl*;*.xlsx;*.xlsm;*.xl</span>
<svg style="left:390.5px;top:416.5px" width="5" height="3.5" viewBox="0 0 5 3.5"><path d="M.4 .4 L2.5 2.8 L4.6 .4" fill="none" stroke="#ccc" stroke-width=".8"></path></svg>
<span class="t" style="left: 222px; top: 437px; font-size: 8.5px; color: rgb(230, 230, 230); transform: translateY(-50%) scaleX(0.682);">ツール(<u>L</u>)</span>
<svg style="left:257.5px;top:436px" width="4.5" height="2.8" viewBox="0 0 5 3"><path d="M0 0h5L2.5 3z" fill="#ddd"></path></svg>
<div class="a" style="left:273px;top:430.5px;width:63px;height:12.8px;background:#333;border:1px solid #d8d8d8"></div>
<div class="a" style="left:327px;top:431.5px;width:1px;height:10.8px;background:#d8d8d8"></div>
<span class="t" style="left: 280px; top: 437px; font-size: 8.5px; color: rgb(242, 242, 242); transform: translateY(-50%) scaleX(0.687);">インポート(<u>M</u>)</span>
<svg style="left:329.5px;top:435.8px" width="4.5" height="2.8" viewBox="0 0 5 3"><path d="M0 0h5L2.5 3z" fill="#eee"></path></svg>
<div class="a" style="left:345.6px;top:429.3px;width:52.4px;height:14px;background:#333;border:1px solid #9a9a9a;border-radius:1.5px"></div>
<span class="t" style="left: 355px; top: 436px; font-size: 8.5px; color: rgb(230, 230, 230); transform: translateY(-50%) scaleX(0.694);">キャンセル</span>
<svg style="left:401px;top:446px" width="6" height="6" viewBox="0 0 6 6"><path d="M5.5 1.5v.1M5.5 3.5v.1M3.5 3.5v.1M5.5 5.5v.1M3.5 5.5v.1M1.5 5.5v.1" stroke="#bdbdbd" stroke-width="1" stroke-linecap="square"></path></svg>
<!-- ===== NAVIGATOR DIALOG ===== -->
<div class="a" style="left:429.5px;top:232.8px;width:336px;height:223px;background:#fff;border-radius:5px;box-shadow:5px 7px 17px 2px rgba(0,0,0,.42),2px 3px 6px 0 rgba(0,0,0,.16),0 0 0 .6px #a8a8a8"></div>
<div class="a" style="left:429.5px;top:422.8px;width:336px;height:33px;background:#f0f0f0;border-radius:0 0 5px 5px"></div>
<div class="a" style="left:735.5px;top:237.5px;width:6px;height:5.5px;border:1px solid #777;border-radius:1px"></div>
<svg style="left:753.5px;top:237px" width="6.5" height="6.5" viewBox="0 0 6.5 6.5"><path d="M.4 .4 L6.1 6.1 M6.1 .4 L.4 6.1" stroke="#666" stroke-width=".8"></path></svg>
<span class="t" style="left: 447px; top: 254.5px; font-size: 12.5px; font-weight: 300; color: rgb(47, 138, 110); transform: translateY(-50%) scaleX(0.873);">ナビゲーター</span>
<div class="a" style="left:446px;top:272px;width:154px;height:13px;background:#fff;border:1px solid #c4c4c4"></div>
<svg style="left:589.5px;top:274.5px" width="8" height="8" viewBox="0 0 8 8"><circle cx="4.9" cy="3.1" r="2.4" fill="none" stroke="#2b6fc2" stroke-width=".9"></circle><path d="M3.1 4.9 L.6 7.4" stroke="#2b6fc2" stroke-width="1.1"></path></svg>
<div class="a" style="left:447px;top:290.5px;width:8px;height:8px;border:1px solid #999;background:#fff"></div>
<span class="t" style="left: 457px; top: 294.7px; font-size: 9px; color: rgb(85, 85, 85); transform: translateY(-50%) scaleX(0.746);">複数のアイテムの選択</span>
<span class="t" style="left: 447px; top: 309.6px; font-size: 9px; color: rgb(85, 85, 85); transform: translateY(-50%) scaleX(0.722);">表示オプション</span>
<svg style="left:498.5px;top:308.5px" width="3.5" height="2.5" viewBox="0 0 5 3"><path d="M0 0h5L2.5 3z" fill="#666"></path></svg>
<svg style="left:590px;top:304.5px" width="9" height="10" viewBox="0 0 9 10"><path d="M.5 .5 H5 L7.5 3 V9.5 H.5Z" fill="#fff" stroke="#8a8a8a" stroke-width=".8"></path><path d="M7.8 6 A1.9 1.9 0 1 0 8 8" fill="none" stroke="#3fae6a" stroke-width=".9"></path></svg>
<!-- tree -->
<svg style="left:450.5px;top:326.5px" width="4" height="4" viewBox="0 0 4 4"><path d="M4 0 V4 H0Z" fill="#444"></path></svg>
<svg style="left:456.3px;top:323px" width="8.5" height="8" viewBox="0 0 8.5 8"><path d="M.2 .8 H3.2 L4 1.8 H8.3 V7.8 H.2Z" fill="#e9bc83"></path></svg>
<span class="t" style="left: 470.3px; top: 327.5px; font-size: 8.5px; color: rgb(102, 102, 102); transform: translateY(-50%) scaleX(0.755);">マスタ.xlsx [2]</span>
<div class="a" style="left:451px;top:334.4px;width:151px;height:12.5px;background:#d1ecdd"></div>
<svg style="left:461px;top:338.2px" width="7.5" height="6.5" viewBox="0 0 7.5 6.5"><rect x=".4" y=".4" width="6.7" height="5.7" fill="#fff" stroke="#5a7594" stroke-width=".7"></rect><rect x=".4" y=".4" width="6.7" height="1.5" fill="#5a7594"></rect><path d="M.4 3.4h6.7M.4 4.8h6.7M2.6 1.9v4.2M4.9 1.9v4.2" stroke="#7f96af" stroke-width=".45"></path></svg>
<span class="t" style="left: 474px; top: 341.7px; font-size: 8.5px; color: rgb(68, 68, 68); transform: translateY(-50%) scaleX(0.789);">M_アイテム</span>
<svg style="left:461px;top:353.4px" width="7.5" height="7" viewBox="0 0 7.5 7"><rect x=".4" y=".4" width="6.7" height="5.4" fill="#fff" stroke="#8a8a8a" stroke-width=".7"></rect><path d="M.4 2.2h6.7M.4 4h6.7M2.6 .4v5.4M4.9 .4v5.4" stroke="#9a9a9a" stroke-width=".45"></path><path d="M.4 6.6h6.7" stroke="#8a8a8a" stroke-width=".7"></path></svg>
<span class="t" style="left: 474px; top: 356.5px; font-size: 8.5px; color: rgb(119, 119, 119); transform: translateY(-50%) scaleX(0.742);">Sheet1</span>
<!-- divider + preview -->
<div class="a" style="left:607.5px;top:271.5px;width:1px;height:144px;background:#dedede"></div>
<span class="t" style="left: 616.7px; top: 279px; font-size: 11.5px; font-weight: 300; color: rgb(47, 132, 104); transform: translateY(-50%) scaleX(0.863);"><span style="color:#8aa39c">M_</span>アイテム</span>
<svg style="left:739px;top:276px" width="9" height="10" viewBox="0 0 9 10"><path d="M.5 .5 H5 L7.5 3 V9.5 H.5Z" fill="#fff" stroke="#8a8a8a" stroke-width=".8"></path><path d="M7.8 6 A1.9 1.9 0 1 0 8 8" fill="none" stroke="#3fae6a" stroke-width=".9"></path></svg>
<div class="a" style="left:616.7px;top:291.5px;width:73.5px;height:59.3px;background:#fff;border:1px solid #dadada"></div>
<div class="a" style="left:617.2px;top:292px;width:72.5px;height:11.3px;background:#f2f2f2"></div>
<div class="a" style="left:616.7px;top:303.3px;width:73.5px;height:1px;background:#dcdcdc"></div>
<div class="a" style="left:616.7px;top:315.3px;width:73.5px;height:1px;background:#e4e4e4"></div>
<div class="a" style="left:616.7px;top:327.3px;width:73.5px;height:1px;background:#e4e4e4"></div>
<div class="a" style="left:616.7px;top:339.3px;width:73.5px;height:1px;background:#e4e4e4"></div>
<div class="a" style="left:653.5px;top:291.5px;width:1px;height:59.3px;background:#dedede"></div>
<span class="t" style="left: 618.2px; top: 297.5px; font-size: 8px; font-weight: bold; color: rgb(51, 51, 51); transform: translateY(-50%) scaleX(0.844);">名前</span>
<span class="t" style="left: 655px; top: 297.5px; font-size: 8px; font-weight: bold; color: rgb(51, 51, 51); transform: translateY(-50%) scaleX(0.844);">価値</span>
<span class="t" style="left:618.5px;top:309.5px;font-size:7.5px;color:#444">A</span>
<span class="t" style="left:618.5px;top:321.3px;font-size:7.5px;color:#444">B</span>
<span class="t" style="left:618.5px;top:333.4px;font-size:7.5px;color:#444">C</span>
<span class="t" style="left:618.5px;top:345.2px;font-size:7.5px;color:#444">D</span>
<span class="t" style="left:684.5px;top:309.5px;font-size:7.5px;font-style:italic;color:#444">1</span>
<span class="t" style="left:684.5px;top:321.3px;font-size:7.5px;font-style:italic;color:#444">2</span>
<span class="t" style="left:684.5px;top:333.4px;font-size:7.5px;font-style:italic;color:#444">3</span>
<span class="t" style="left:684.5px;top:345.2px;font-size:7.5px;font-style:italic;color:#444">4</span>
<!-- footer buttons -->
<div class="a" style="left:666.4px;top:434.3px;width:34px;height:12.3px;background:#fff;border:1px solid #6aa588;border-radius:1px"></div>
<span class="t" style="left: 679.2px; top: 440.6px; font-size: 7.5px; color: rgb(92, 135, 114); transform: translateY(-50%) scaleX(0.848);">OK</span>
<div class="a" style="left:708px;top:434.5px;width:40.5px;height:12.2px;background:#fff;border:1px solid #dcdcdc;border-radius:1px"></div>
<span class="t" style="left: 713px; top: 440.6px; font-size: 7.5px; color: rgb(68, 68, 68); transform: translateY(-50%) scaleX(0.827);">キャンセル</span>
<!-- ===== PURPLE ANNOTATION OVERLAY ===== -->
<svg style="left:0;top:0" width="795" height="486" viewBox="0 0 795 486">
  <!-- connectors (with offset light shadow) -->
  <g style="filter:drop-shadow(3.3px 3.3px .35px rgba(213,213,213,.98))">
   <g opacity=".86" fill="none" stroke="#93008f" stroke-width="2.15" stroke-linejoin="miter">
    <path d="M488.9 117 V238.9 H171.05 V368"></path>
    <path d="M263 390.8 H302 V425"></path>
    <path d="M349 435 H393.9 V339.1 H447"></path>
    <path d="M614 339.9 H682.8 V425"></path>
    <g fill="#93008f" stroke="none">
      <path d="M488.9 109.4 L497.7 126.7 L488.9 119.4 L480.1 126.7Z"></path>
      <path d="M256.5 390.8 L273.8 382 L266.5 390.8 L273.8 399.6Z"></path>
      <path d="M341.5 435.1 L358.3 426.3 L351.5 435.1 L358.3 443.9Z"></path>
      <path d="M607.8 339.9 L625.1 331.1 L617.8 339.9 L625.1 348.7Z"></path>
    </g>
   </g>
  </g>
  <!-- boxes with soft offset glow -->
  <g style="filter:drop-shadow(2.6px 2.6px 1.8px rgba(228,228,228,.85))">
   <g opacity=".86" fill="none" stroke="#93008f">
    <rect x="423.55" y="76.25" width="131.9" height="33.1" stroke-width="4.7"></rect>
    <rect x="86.8" y="369.9" width="169" height="44.4" stroke-width="5"></rect>
    <rect x="265.5" y="426.4" width="75.6" height="19.8" stroke-width="4.5"></rect>
    <rect x="448.5" y="331.9" width="158.7" height="17.4" stroke-width="4.8"></rect>
    <rect x="662.5" y="426.8" width="40.6" height="25" stroke-width="5"></rect>
   </g>
  </g>
  <!-- numbered circles -->
  <g style="filter:drop-shadow(2.4px 2.4px 2.2px rgba(240,240,240,.9))">
    <circle cx="394" cy="95.5" r="19.1" fill="#a3279f"></circle>
    <circle cx="206" cy="335.9" r="19" fill="#a3279f"></circle>
    <circle cx="448" cy="304.8" r="19" fill="#a3279f"></circle>
  </g>
  <g fill="#fff" font-family="Liberation Sans, sans-serif" font-weight="bold" text-anchor="middle">
    <text x="394" y="102.3" font-size="20">i</text>
    <text x="206.1" y="342.9" font-size="20">ii</text>
    <text x="448" y="311.6" font-size="19.5">iii</text>
  </g>
</svg>


</body></html>
